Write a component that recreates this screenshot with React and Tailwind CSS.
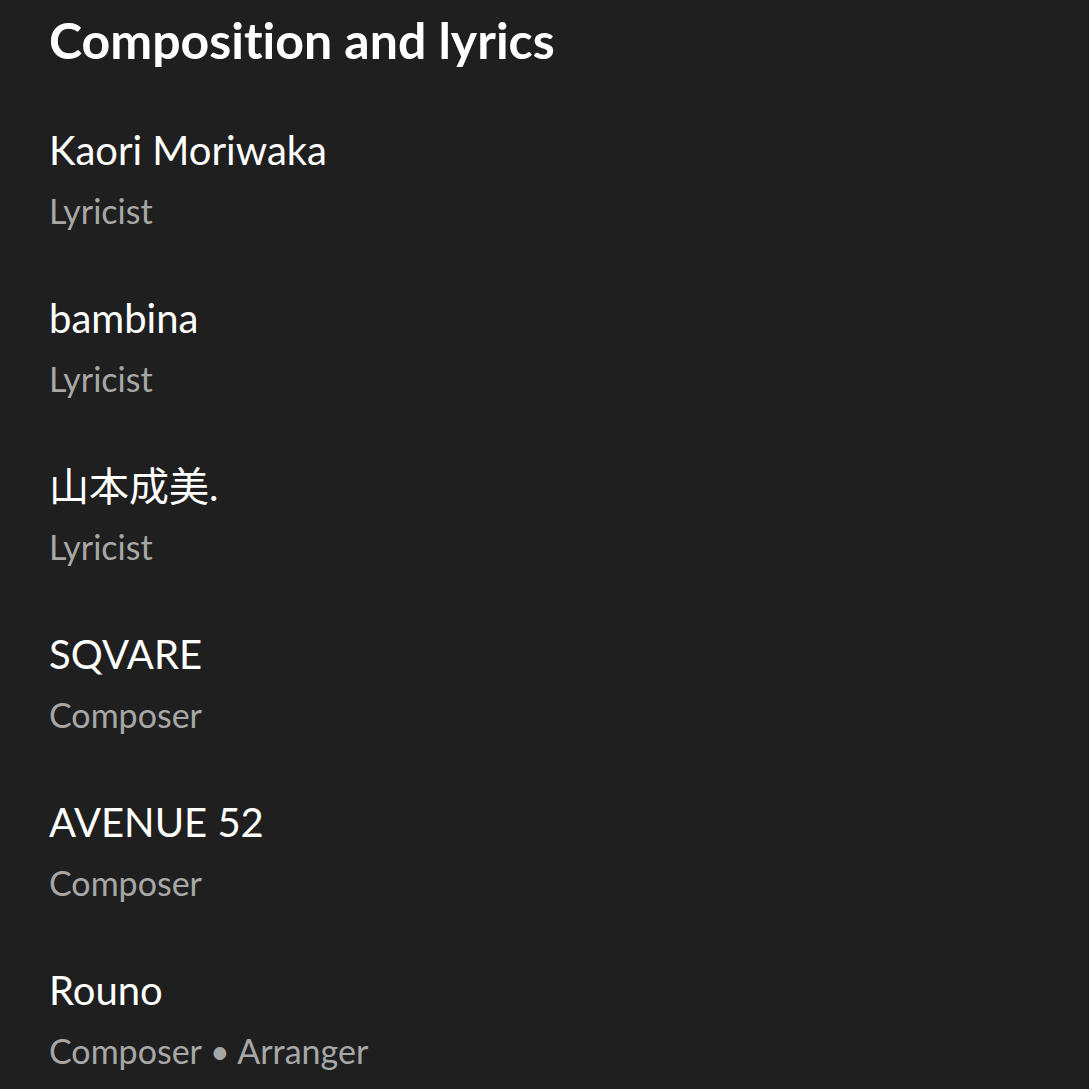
export default function App() {
  const items = [
    { name: "Kaori Moriwaka", role: "Lyricist" },
    { name: "bambina", role: "Lyricist" },
    { name: "山本成美.", role: "Lyricist" },
    { name: "SQVARE", role: "Composer" },
    { name: "AVENUE 52", role: "Composer" },
    { name: "Rouno", role: "Composer • Arranger" },
  ];
  return (
    <div
      className="w-[1089px] h-[1089px] overflow-hidden bg-[#1f1f1f] pl-[49px] pt-[12px] [font-variant-ligatures:none]"
      style={{ fontFamily: 'Lato, "Noto Sans CJK JP", sans-serif' }}
    >
      <h1 className="text-[50px] leading-[56px] font-bold text-white">
        Composition and lyrics
      </h1>
      <div className="mt-[58px] flex flex-col">
        {items.map((it) => (
          <div key={it.name} className="flex flex-col h-[168px]">
            <div className="text-[40px] leading-[48px] text-white">{it.name}</div>
            <div className="mt-[17px] text-[34px] leading-[40px] text-[#a7a7a7]">{it.role}</div>
          </div>
        ))}
      </div>
    </div>
  );
}
